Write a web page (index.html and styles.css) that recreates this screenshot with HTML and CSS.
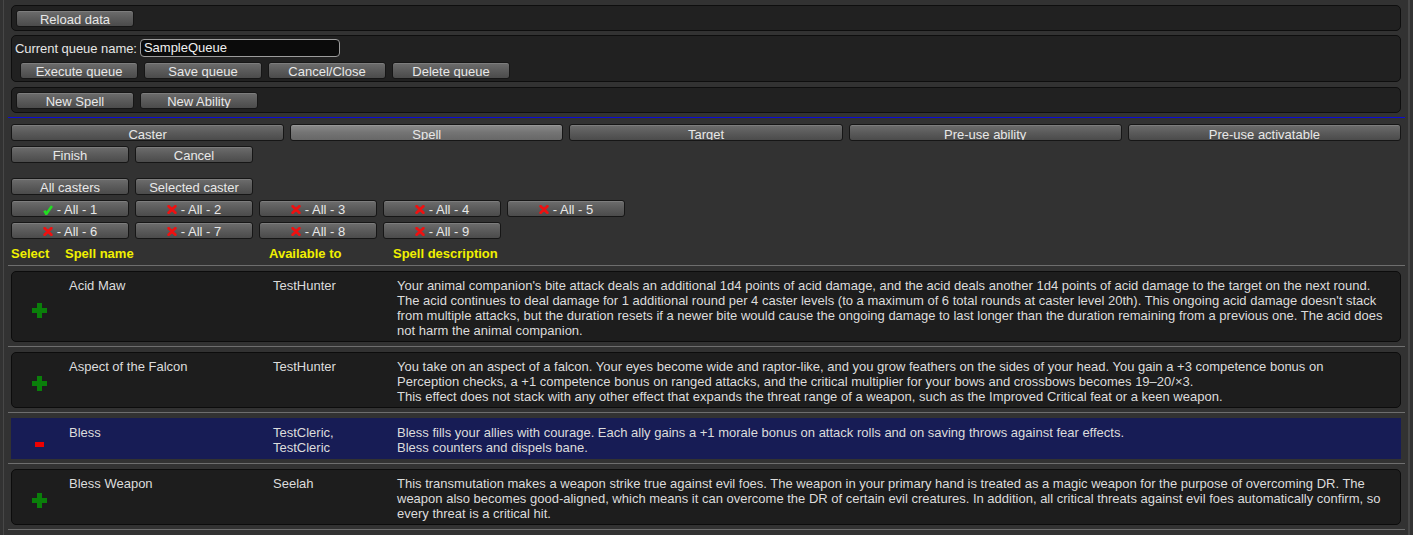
FILE: index.html
```html
<!DOCTYPE html>
<html>
<head>
<meta charset="utf-8">
<link rel="stylesheet" href="styles.css">
</head>
<body>
<div class="frame">
  <div class="panel panel-reload">
    <div class="row"><div class="btn">Reload data</div></div>
  </div>
  <div class="panel panel-queue">
    <div class="queue-name">
      <span class="label">Current queue name:</span>
      <div class="text-input">SampleQueue</div>
    </div>
    <div class="row queue-actions">
      <div class="btn">Execute queue</div>
      <div class="btn">Save queue</div>
      <div class="btn">Cancel/Close</div>
      <div class="btn">Delete queue</div>
    </div>
  </div>
  <div class="panel panel-new">
    <div class="row">
      <div class="btn">New Spell</div>
      <div class="btn">New Ability</div>
    </div>
  </div>
  <div class="rule-blue"></div>
  <div class="tabs">
    <div class="btn tab">Caster</div>
    <div class="btn tab active">Spell</div>
    <div class="btn tab">Target</div>
    <div class="btn tab">Pre-use ability</div>
    <div class="btn tab">Pre-use activatable</div>
  </div>
  <div class="row gap-s">
    <div class="btn">Finish</div>
    <div class="btn">Cancel</div>
  </div>
  <div class="row gap-l">
    <div class="btn">All casters</div>
    <div class="btn">Selected caster</div>
  </div>
  <div class="row gap-s">
    <div class="btn"><span class="ico"><svg width="10" height="10" viewBox="0 0 10 10"><path d="M1.4 5.6 L3.3 9 L9 1" fill="none" stroke="#22dd22" stroke-width="2.6" stroke-linejoin="round"/></svg></span>- All - 1</div>
    <div class="btn"><span class="ico"><svg width="10" height="9" viewBox="0 0 10 9"><path d="M1.6 1.2 L8.4 7.8 M8.4 1.2 L1.6 7.8" stroke="#f01010" stroke-width="2.6" stroke-linecap="round"/></svg></span>- All - 2</div>
    <div class="btn"><span class="ico"><svg width="10" height="9" viewBox="0 0 10 9"><path d="M1.6 1.2 L8.4 7.8 M8.4 1.2 L1.6 7.8" stroke="#f01010" stroke-width="2.6" stroke-linecap="round"/></svg></span>- All - 3</div>
    <div class="btn"><span class="ico"><svg width="10" height="9" viewBox="0 0 10 9"><path d="M1.6 1.2 L8.4 7.8 M8.4 1.2 L1.6 7.8" stroke="#f01010" stroke-width="2.6" stroke-linecap="round"/></svg></span>- All - 4</div>
    <div class="btn"><span class="ico"><svg width="10" height="9" viewBox="0 0 10 9"><path d="M1.6 1.2 L8.4 7.8 M8.4 1.2 L1.6 7.8" stroke="#f01010" stroke-width="2.6" stroke-linecap="round"/></svg></span>- All - 5</div>
  </div>
  <div class="row gap-s">
    <div class="btn"><span class="ico"><svg width="10" height="9" viewBox="0 0 10 9"><path d="M1.6 1.2 L8.4 7.8 M8.4 1.2 L1.6 7.8" stroke="#f01010" stroke-width="2.6" stroke-linecap="round"/></svg></span>- All - 6</div>
    <div class="btn"><span class="ico"><svg width="10" height="9" viewBox="0 0 10 9"><path d="M1.6 1.2 L8.4 7.8 M8.4 1.2 L1.6 7.8" stroke="#f01010" stroke-width="2.6" stroke-linecap="round"/></svg></span>- All - 7</div>
    <div class="btn"><span class="ico"><svg width="10" height="9" viewBox="0 0 10 9"><path d="M1.6 1.2 L8.4 7.8 M8.4 1.2 L1.6 7.8" stroke="#f01010" stroke-width="2.6" stroke-linecap="round"/></svg></span>- All - 8</div>
    <div class="btn"><span class="ico"><svg width="10" height="9" viewBox="0 0 10 9"><path d="M1.6 1.2 L8.4 7.8 M8.4 1.2 L1.6 7.8" stroke="#f01010" stroke-width="2.6" stroke-linecap="round"/></svg></span>- All - 9</div>
  </div>

  <div class="thead">
    <div class="c-sel">Select</div>
    <div class="c-name">Spell name</div>
    <div class="c-avail">Available to</div>
    <div class="c-desc">Spell description</div>
  </div>
  <div class="sep"></div>

  <div class="card">
    <div class="c-sel"><span class="mark"><svg width="15" height="15" viewBox="0 0 15 15"><path d="M5 0h5v5h5v5h-5v5h-5v-5h-5v-5h5z" fill="#0a7f0a"/></svg></span></div>
    <div class="c-name">Acid Maw</div>
    <div class="c-avail">TestHunter</div>
    <div class="c-desc">Your animal companion's bite attack deals an additional 1d4 points of acid damage, and the acid deals another 1d4 points of acid damage to the target on the next round.<br>The acid continues to deal damage for 1 additional round per 4 caster levels (to a maximum of 6 total rounds at caster level 20th). This ongoing acid damage doesn't stack<br>from multiple attacks, but the duration resets if a newer bite would cause the ongoing damage to last longer than the duration remaining from a previous one. The acid does<br>not harm the animal companion.</div>
  </div>
  <div class="sep"></div>

  <div class="card">
    <div class="c-sel"><span class="mark"><svg width="15" height="15" viewBox="0 0 15 15"><path d="M5 0h5v5h5v5h-5v5h-5v-5h-5v-5h5z" fill="#0a7f0a"/></svg></span></div>
    <div class="c-name">Aspect of the Falcon</div>
    <div class="c-avail">TestHunter</div>
    <div class="c-desc">You take on an aspect of a falcon. Your eyes become wide and raptor-like, and you grow feathers on the sides of your head. You gain a +3 competence bonus on<br>Perception checks, a +1 competence bonus on ranged attacks, and the critical multiplier for your bows and crossbows becomes 19–20/×3.<br>This effect does not stack with any other effect that expands the threat range of a weapon, such as the Improved Critical feat or a keen weapon.</div>
  </div>
  <div class="sep"></div>

  <div class="card selected">
    <div class="c-sel"><span class="mark minus"><svg width="9" height="5" viewBox="0 0 9 5"><rect width="9" height="5" fill="#ee0000"/></svg></span></div>
    <div class="c-name">Bless</div>
    <div class="c-avail">TestCleric,<br>TestCleric</div>
    <div class="c-desc">Bless fills your allies with courage. Each ally gains a +1 morale bonus on attack rolls and on saving throws against fear effects.<br>Bless counters and dispels bane.</div>
  </div>
  <div class="sep"></div>

  <div class="card">
    <div class="c-sel"><span class="mark"><svg width="15" height="15" viewBox="0 0 15 15"><path d="M5 0h5v5h5v5h-5v5h-5v-5h-5v-5h5z" fill="#0a7f0a"/></svg></span></div>
    <div class="c-name">Bless Weapon</div>
    <div class="c-avail">Seelah</div>
    <div class="c-desc">This transmutation makes a weapon strike true against evil foes. The weapon in your primary hand is treated as a magic weapon for the purpose of overcoming DR. The<br>weapon also becomes good-aligned, which means it can overcome the DR of certain evil creatures. In addition, all critical threats against evil foes automatically confirm, so<br>every threat is a critical hit.</div>
  </div>
  <div class="sep"></div>
</div>
</body>
</html>
```

FILE: styles.css
```css
* { box-sizing: border-box; }
html, body { margin: 0; padding: 0; }
body {
  background: #323232;
  font-family: "Liberation Sans", Arial, sans-serif;
  font-size: 13px;
  color: #e2e2e2;
  width: 1413px;
  height: 535px;
  overflow: hidden;
}
.frame {
  margin: 0 3px;
  border-left: 1px solid #474747;
  border-right: 2px solid #474747;
  height: 535px;
  padding: 5px 7px 0 7px;
}
.panel {
  background: #212121;
  border: 1px solid #0e0e0e;
  border-radius: 5px;
}
.panel-reload { padding: 4px 4px 3px; }
.panel-queue { margin-top: 4px; padding: 3px 3px 2px; }
.panel-new { margin-top: 5px; padding: 4px 4px 3px; }
.queue-name {
  display: flex;
  align-items: center;
  gap: 3px;
  height: 18px;
  color: #e6e6e6;
}
.label { letter-spacing: -0.05px; }
.text-input {
  width: 200px;
  height: 18px;
  background: #0b0b0b;
  border: 1px solid #9c9c9c;
  border-radius: 4px;
  padding-left: 3px;
  line-height: 16px;
  color: #f0f0f0;
}
.row { display: flex; gap: 6px; }
.queue-actions { margin-top: 5px; padding-left: 5px; }
.gap-s { margin-top: 5px; }
.gap-l { margin-top: 15px; }
.btn {
  width: 118px;
  height: 17px;
  flex: none;
  display: flex;
  justify-content: center;
  align-items: flex-start;
  border: 1px solid #161616;
  border-radius: 3px;
  background: linear-gradient(#6d6d6d, #5b5b5b 50%, #4b4b4b);
  color: #e8e8e8;
  line-height: 15px;
  padding-top: 1px;
  overflow: hidden;
  white-space: nowrap;
  box-shadow: inset 0 1px 0 rgba(255, 255, 255, 0.12);
}
.ico {
  display: flex;
  align-items: center;
  height: 15px;
  margin-right: 4px;
}
.rule-blue {
  height: 1px;
  background: #0b0bd6;
  margin: 4px -4px 0 -3px;
}
.tabs {
  margin-top: 6px;
  display: grid;
  grid-template-columns: repeat(5, 1fr);
  gap: 6px;
}
.tab { width: auto; padding-top: 2px; }
.tab.active { background: linear-gradient(#8a8a8a, #747474 50%, #676767); }

.thead {
  display: flex;
  height: 26px;
  padding-top: 7px;
  line-height: 15px;
  font-weight: bold;
  color: #f0f000;
}
.c-sel { width: 54px; flex: none; }
.c-name { width: 204px; flex: none; }
.c-avail { width: 124px; flex: none; }
.c-desc { flex: 1; }
.sep {
  height: 1px;
  background: #6e6e6e;
  margin: 0 -4px 0 -3px;
}
.card {
  display: flex;
  margin-top: 5px;
  margin-bottom: 4px;
  border: 1px solid #0c0c0c;
  border-radius: 5px;
  background: #1d1d1d;
  padding: 6px 8px 3px 3px;
  line-height: 15px;
  color: #dcdcdc;
}
.card.selected {
  background: #171c55;
  border-color: #171c55;
  border-radius: 0;
}
.card .c-sel {
  display: flex;
  align-items: center;
  padding-top: 4px;
  padding-left: 17px;
}
.mark {
  width: 15px;
  display: flex;
  justify-content: center;
}
.mark svg { display: block; }
.mark.minus { margin-top: 5px; }
```
